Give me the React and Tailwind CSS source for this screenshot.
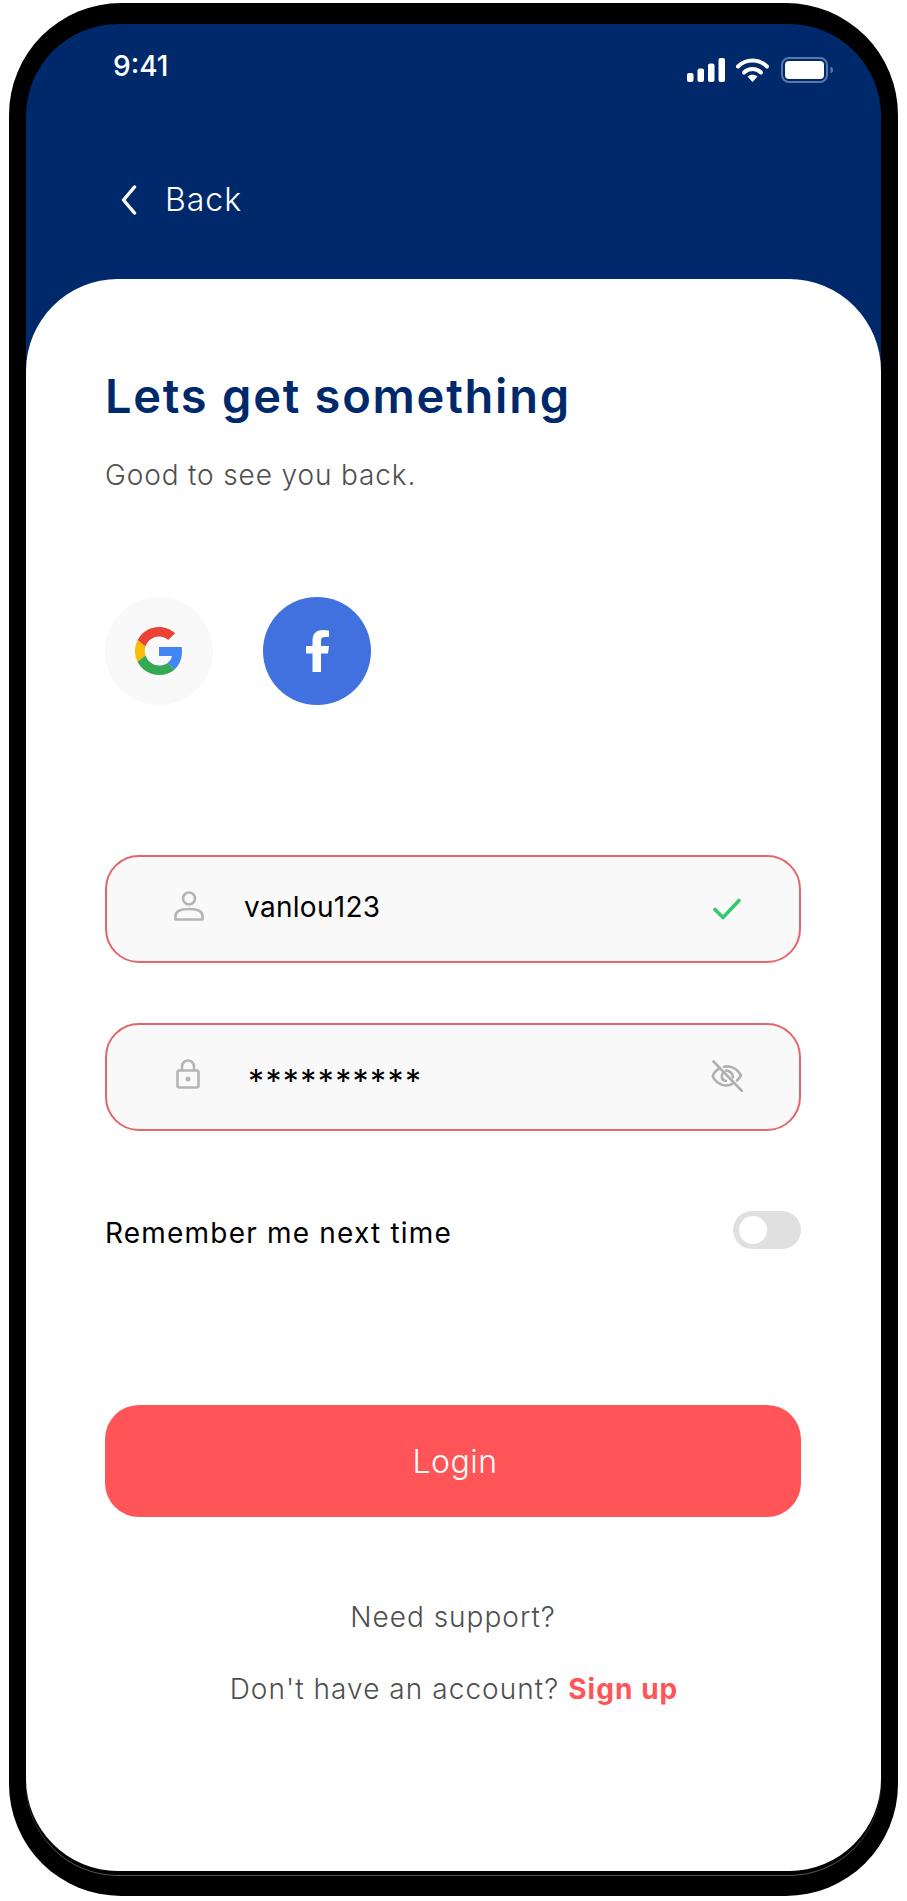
const font = "font-['Inter','Noto_Sans',sans-serif]";

const StatusIcons = () => (
  <div className="flex items-center">
    <svg width="38" height="24" viewBox="0 0 38 24" fill="#ffffff">
      <rect x="0" y="15" width="6.5" height="9" rx="2" />
      <rect x="10.5" y="10.5" width="6.5" height="13.5" rx="2" />
      <rect x="21" y="5.5" width="6.5" height="18.5" rx="2" />
      <rect x="31.5" y="0" width="6.5" height="24" rx="2" />
    </svg>
    <svg className="ml-[11px]" width="33" height="24" viewBox="0 0 33 24" fill="none" stroke="#ffffff">
      <path d="M2 8.500C10 .6 23 .6 31 8.500" strokeWidth="4" strokeLinecap="round" />
      <path d="M8 14.500c4.700-4.600 12.300-4.600 17 0" strokeWidth="4" strokeLinecap="round" />
      <path d="M11.500 18.600c3-2.600 7-2.600 10 0l-5 5.400z" fill="#ffffff" stroke="none" />
    </svg>
    <svg className="ml-[12px]" width="53" height="26" viewBox="0 0 53 26" fill="none">
      <rect x="1" y="1" width="45" height="24" rx="7" stroke="#5a78a8" strokeWidth="2" />
      <rect x="4" y="4" width="39" height="18" rx="4" fill="#ffffff" />
      <path d="M49.500 9.500c2 .8 2.500 2 2.500 3.500s-.5 2.700-2.500 3.500z" fill="#5a78a8" />
    </svg>
  </div>
);

const GoogleIcon = () => (
  <svg width="48" height="48" viewBox="0 0 48 48">
    <path fill="#EA4335" d="M24 9.500c3.540 0 6.710 1.220 9.210 3.600l6.850-6.850C35.900 2.380 30.470 0 24 0 14.620 0 6.510 5.380 2.560 13.220l7.980 6.190C12.430 13.720 17.740 9.500 24 9.500z" />
    <path fill="#4285F4" d="M46.980 24.550c0-1.570-.15-3.090-.38-4.550H24v9.020h12.940c-.58 2.960-2.260 5.480-4.780 7.180l7.730 6c4.510-4.180 7.090-10.360 7.090-17.650z" />
    <path fill="#FBBC05" d="M10.530 28.590c-.48-1.450-.76-2.990-.76-4.590s.27-3.140.76-4.590l-7.980-6.190C.92 16.460 0 20.120 0 24c0 3.880.92 7.540 2.560 10.780l7.970-6.190z" />
    <path fill="#34A853" d="M24 48c6.480 0 11.930-2.130 15.890-5.810l-7.730-6c-2.150 1.450-4.920 2.300-8.160 2.300-6.260 0-11.570-4.220-13.470-9.910l-7.980 6.190C6.510 42.620 14.620 48 24 48z" />
  </svg>
);

const FacebookIcon = () => (
  <svg width="23" height="42" viewBox="0 0 23 42" fill="#ffffff">
    <path d="M6.500 42V23.500H0V16h6.500v-5.500C6.500 3.500 10.500 0 16.500 0c2 0 4.500.2 6.500.5V7h-3.500C16 7 15 8.500 15 10.800V16h8l-1 7.500h-7V42z" />
  </svg>
);

const PersonIcon = () => (
  <svg className="mb-[7px]" width="30" height="30" viewBox="0 0 30 30" fill="none" stroke="#b5b5b5" strokeWidth="2.600">
    <circle cx="15" cy="7.500" r="6" />
    <path d="M1.500 28.500V25c0-4.500 5-7 13.500-7s13.500 2.500 13.500 7v3.500z" strokeLinejoin="round" />
  </svg>
);

const LockIcon = () => (
  <svg className="mb-[6px] mr-[2px]" width="24" height="30" viewBox="0 0 24 30" fill="none" stroke="#b5b5b5" strokeWidth="2.600">
    <rect x="1.500" y="11.500" width="21" height="17" rx="2" />
    <path d="M6 11.500V7.500a6 6 0 0 1 12 0v4" />
    <circle cx="12" cy="20" r="2.500" fill="#b5b5b5" stroke="none" />
  </svg>
);

const CheckIcon = () => (
  <svg width="28" height="22" viewBox="0 0 28 22" fill="none" stroke="#34c96f" strokeWidth="3.600" strokeLinecap="round" strokeLinejoin="round">
    <path d="M2 11.500l8 8L26 2.500" />
  </svg>
);

const EyeOffIcon = () => (
  <svg className="mb-[2px]" width="32" height="32" viewBox="0 0 32 32" fill="none" stroke="#b0b0b0" strokeWidth="2.600" strokeLinecap="round">
    <path d="M8 8.500C4.500 11 2 14 1.800 16.500c1.500 4 7 9 13.200 9 2.800 0 5-.8 7-2" />
    <path d="M13 6.800c6.500-1.500 13 1.500 17 8.500-.8 2-2.300 3.800-4 5.200" />
    <path d="M12 13c-2.500 3-1.500 7 3 8" />
    <path d="M15 10.500c3.500 0 7 3 7 7" />
    <path d="M2.500 1.500L31 31" />
  </svg>
);

const InputRow = ({ icon, right, children }) => (
  <div className="flex h-[108px] w-[696px] items-center rounded-[34px] border-2 border-[#e2666b] bg-[#f9f9f9]">
    <div className="ml-[66px] flex w-[32px] shrink-0 justify-center">{icon}</div>
    {children}
    <div className="ml-auto mr-[56px] flex w-[32px] justify-center">{right}</div>
  </div>
);

export default function App() {
  return (
    <div className={`h-[1901px] w-[907px] overflow-hidden bg-white pl-[9px] pt-[3px] ${font}`}>
      <div className="h-[1893px] w-[889px] rounded-[112px] bg-black pl-[17px] pr-[17px] pt-[21px]">
        <div className="flex h-[1847px] w-[855px] flex-col overflow-hidden rounded-[92px] bg-[#00296b] shadow-[0_4px_0_0_#000000,0_5px_0_0_#555555]">
          <div className="h-[255px] shrink-0 text-white">
            <div className="flex items-start justify-between pl-[87px] pr-[47px] pt-[25px]">
              <span className="text-[28px] font-medium leading-[34px]">9:41</span>
              <div className="pt-[8px]">
                <StatusIcons />
              </div>
            </div>
            <div className="mt-[97px] flex items-center pl-[95px]">
              <svg width="16" height="30" viewBox="0 0 16 30" fill="none" stroke="#ffffff" strokeWidth="3.400" strokeLinecap="round" strokeLinejoin="round">
                <path d="M13.500 2L2.500 15l11 13" />
              </svg>
              <span className="ml-[28px] text-[32px] font-light leading-[40px] tracking-[1px]">Back</span>
            </div>
          </div>

          <div className="flex-1 rounded-t-[92px] bg-white pl-[79px] pt-[87px]">
            <h1 className="text-[47px] font-semibold leading-[60px] tracking-[1.75px] text-[#00296b]">Lets get something</h1>
            <p className="mt-[29px] text-[28px] font-light leading-[40px] tracking-[0.87px] text-[#4f4f4f]">Good to see you back.</p>

            <div className="mt-[102px] flex gap-[50px]">
              <div className="flex h-[108px] w-[108px] items-center justify-center rounded-full bg-[#f9f9f9]">
                <GoogleIcon />
              </div>
              <div className="flex h-[108px] w-[108px] items-center justify-center rounded-full bg-[#4170df]">
                <FacebookIcon />
              </div>
            </div>

            <div className="mt-[150px]">
              <InputRow icon={<PersonIcon />} right={<CheckIcon />}>
                <span className="mb-[4px] ml-[39px] text-[28px] leading-[40px] tracking-[0.3px] text-black">vanlou123</span>
              </InputRow>
            </div>
            <div className="mt-[60px]">
              <InputRow icon={<LockIcon />} right={<EyeOffIcon />}>
                <span className="ml-[43px] mt-[10px] text-[32px] leading-[40px] tracking-[1.4px] text-black">**********</span>
              </InputRow>
            </div>

            <div className="mt-[80px] flex h-[38px] w-[696px] items-center justify-between">
              <span className="mt-[6px] text-[28px] leading-[40px] tracking-[1.2px] text-black">Remember me next time</span>
              <div className="flex h-[38px] w-[68px] items-center rounded-full bg-[#e0e0e0] pl-[6px]">
                <div className="h-[28px] w-[28px] rounded-full bg-white" />
              </div>
            </div>

            <button className="mt-[156px] block h-[112px] w-[696px] rounded-[34px] bg-[#ff5558] pl-[4px] pt-[2px] text-[32px] font-light tracking-[0.5px] text-white">
              Login
            </button>

            <p className="mt-[80px] w-[696px] text-center text-[28px] font-light leading-[40px] tracking-[1px] text-[#4f4f4f]">Need support?</p>
            <p className="mt-[32px] w-[696px] pl-[2px] text-center text-[28px] font-light leading-[40px] tracking-[1.05px] text-[#4f4f4f]">
              Don't have an account? <span className="font-bold text-[#ff5558]">Sign up</span>
            </p>
          </div>
        </div>
      </div>
    </div>
  );
}
